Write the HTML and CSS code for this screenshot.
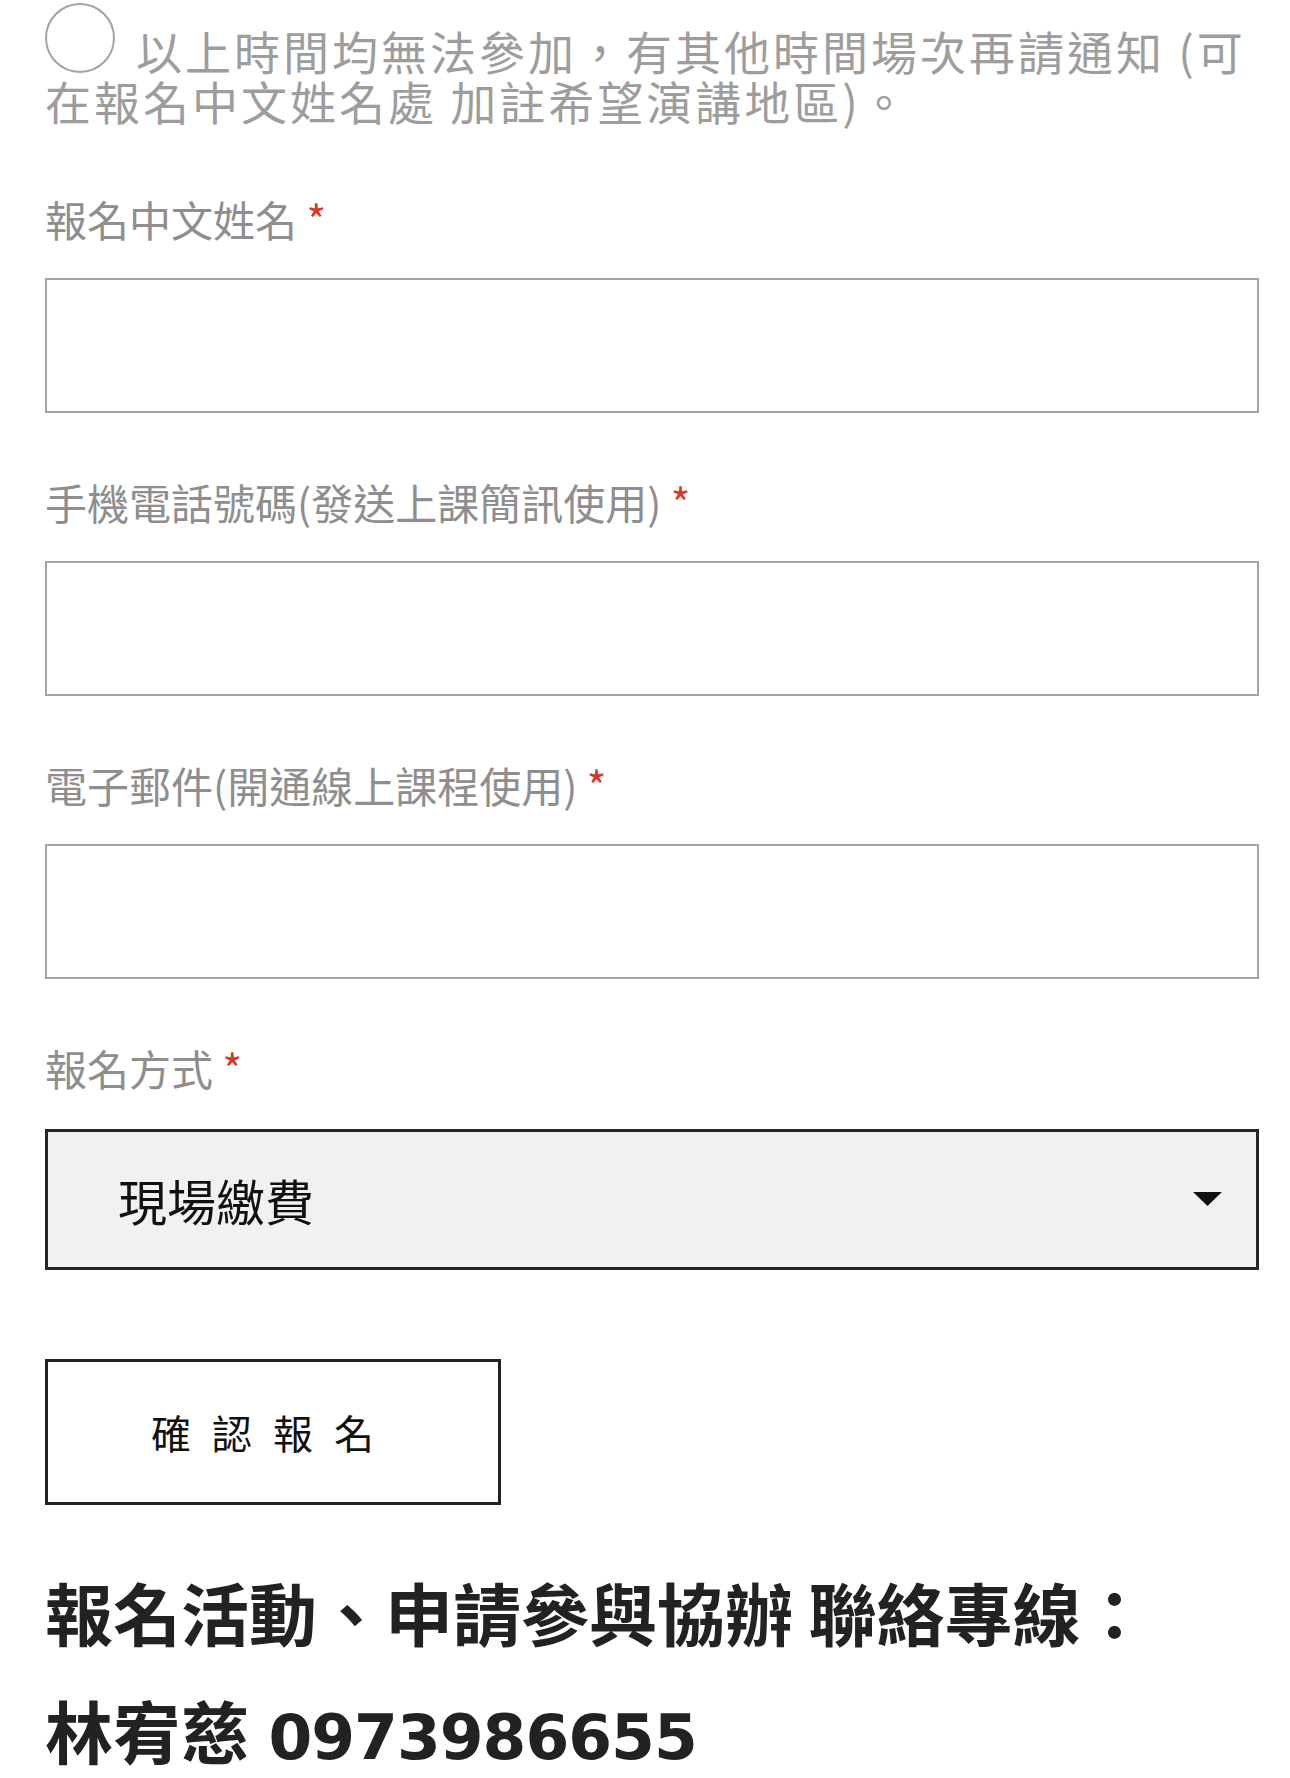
FILE: index.html
```html
<!DOCTYPE html>
<html lang="zh-Hant">
<head>
<meta charset="utf-8">
<title>報名表單</title>
<link rel="stylesheet" href="styles.css">
</head>
<body>
<form class="signup">
  <label class="choice">
    <input class="choice-radio" type="radio" name="session" value="other">以上時間均無法參加，有其他時間場次再請通知 (可在報名中文姓名處 加註希望演講地區)。
  </label>

  <div class="field">
    <label class="field-label" for="f-name">報名中文姓名 <span class="req">*</span></label>
    <input class="text-input" id="f-name" type="text">
  </div>

  <div class="field">
    <label class="field-label" for="f-phone">手機電話號碼(發送上課簡訊使用) <span class="req">*</span></label>
    <input class="text-input" id="f-phone" type="tel">
  </div>

  <div class="field">
    <label class="field-label" for="f-mail">電子郵件(開通線上課程使用) <span class="req">*</span></label>
    <input class="text-input" id="f-mail" type="email">
  </div>

  <div class="field">
    <label class="field-label" for="f-pay">報名方式 <span class="req">*</span></label>
    <div class="select-wrap">
      <select class="select" id="f-pay">
        <option>現場繳費</option>
      </select>
      <svg class="select-caret" width="29" height="14" viewBox="0 0 29 14" aria-hidden="true">
        <path d="M0 0 H29 L14.5 14 Z" fill="#111"/>
      </svg>
    </div>
  </div>

  <button class="submit" type="submit">確認報名</button>

  <div class="contact">
    <p class="contact-line">報名活動、申請參與協辦 聯絡專線：</p>
    <p class="contact-line">林宥慈 <span class="contact-num">0973986655</span></p>
  </div>
</form>
</body>
</html>
```

FILE: styles.css
```css
html, body {
  margin: 0;
  padding: 0;
  background: #ffffff;
}

body {
  font-family: "Noto Sans CJK TC", "Noto Sans CJK SC", sans-serif;
  color: #222;
}

.signup {
  padding: 3px 31px 0 45px;
}

/* radio option */
.choice {
  display: block;
  font-size: 46px;
  line-height: 50px;
  letter-spacing: 3px;
  color: #9d9d9d;
  margin-right: -20px;
}

.choice-radio {
  -webkit-appearance: none;
  appearance: none;
  box-sizing: border-box;
  width: 70px;
  height: 70px;
  margin: 0 21px 0 0;
  border: 2px solid #a2a2a2;
  border-radius: 50%;
  background: #fff;
  vertical-align: -3px;
}

/* fields */
.field {
  margin-top: 65px;
}

.signup > .field:first-of-type {
  margin-top: 70px;
}

.field-label {
  display: block;
  font-size: 42px;
  line-height: 48px;
  color: #8e8e8e;
}

.req {
  color: #d9362b;
}

.text-input {
  display: block;
  box-sizing: border-box;
  width: 100%;
  height: 135px;
  margin: 35px 0 0;
  border: 2px solid #a4a4a4;
  border-radius: 0;
  background: #fff;
  outline: none;
}

.select-wrap {
  position: relative;
  margin-top: 37px;
}

.select {
  display: block;
  -webkit-appearance: none;
  appearance: none;
  box-sizing: border-box;
  width: 100%;
  height: 141px;
  margin: 0;
  padding: 0 80px 0 70px;
  border: 3px solid #262626;
  border-radius: 0;
  background: #f1f1f1;
  font-family: "Noto Sans CJK TC", "Noto Sans CJK SC", sans-serif;
  font-size: 49px;
  color: #111;
  outline: none;
}

.select-caret {
  position: absolute;
  right: 37px;
  top: 63px;
}

/* submit */
.submit {
  display: block;
  box-sizing: border-box;
  width: 456px;
  height: 146px;
  margin: 89px 0 0;
  padding: 0;
  border: 3px solid #222;
  border-radius: 0;
  background: #fff;
  font-family: "Noto Sans CJK TC", "Noto Sans CJK SC", sans-serif;
  font-size: 40px;
  letter-spacing: 21px;
  color: #111;
}

/* contact info */
.contact {
  margin-top: 48px;
}

.contact-line {
  margin: 0;
  font-size: 68px;
  line-height: 118px;
  font-weight: 700;
  color: #222;
  white-space: nowrap;
}

.contact-num {
  font-family: "DejaVu Sans", "Noto Sans", sans-serif;
  font-size: 63px;
  line-height: 1;
  letter-spacing: -1px;
  margin-left: 4px;
}
```
